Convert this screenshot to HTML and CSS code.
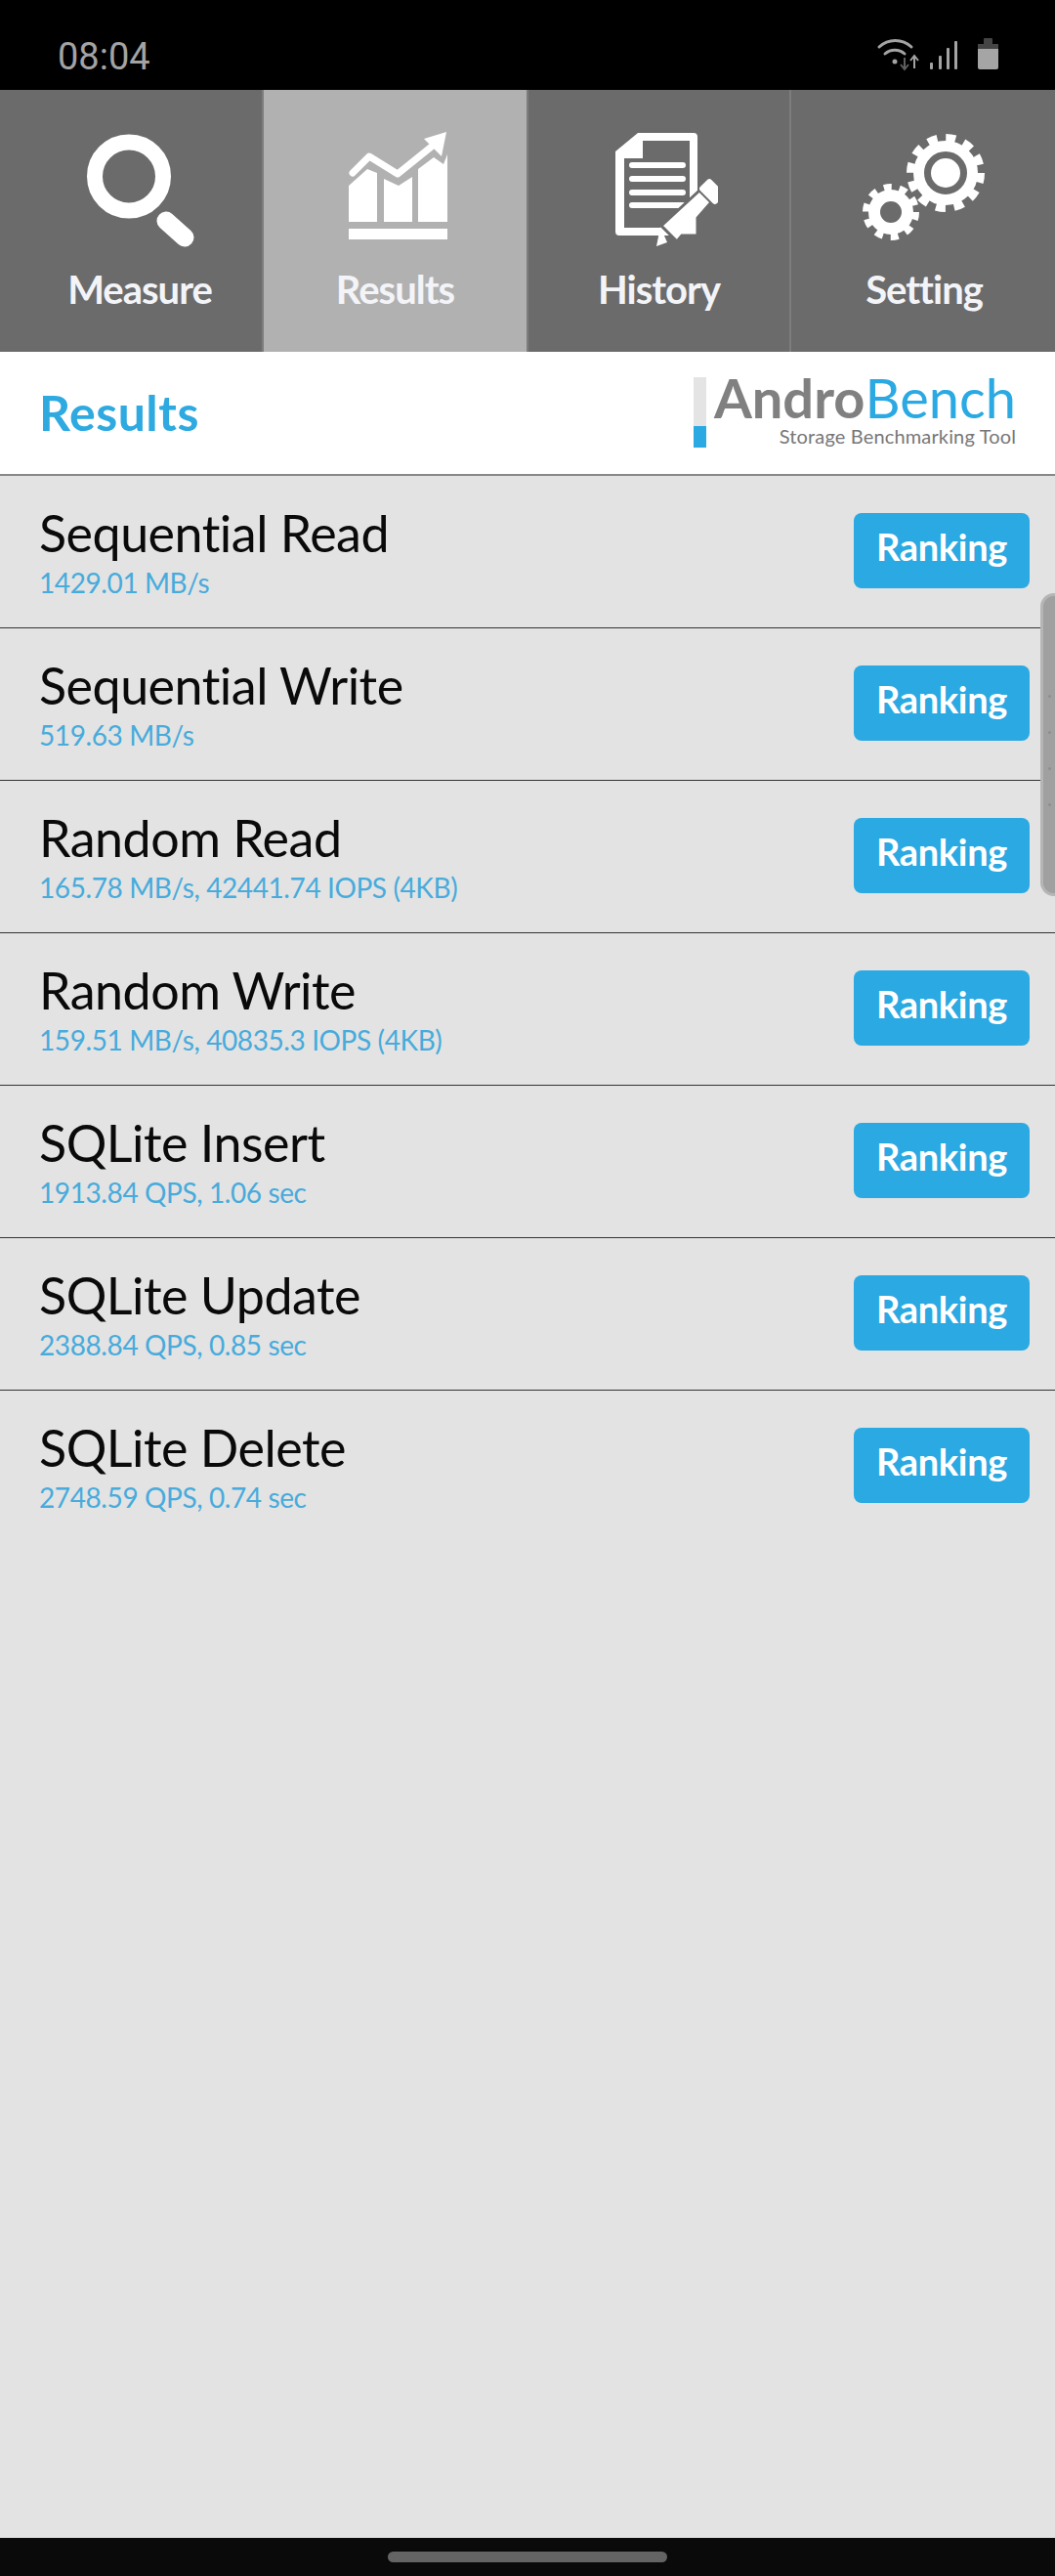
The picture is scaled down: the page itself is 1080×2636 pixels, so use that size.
FILE: index.html
```html
<!DOCTYPE html>
<html lang="en">
<head>
    <meta charset="UTF-8">
    <title>AndroBench Results</title>
    <link rel="stylesheet" href="styles.css">
</head>
<body>

<!-- Status bar -->
<div class="status-bar">
    <span class="clock">08:04</span>
    <svg class="status-icons" viewBox="890 36 140 40" width="140" height="40">
        <g fill="none" stroke="#a3a3a3" stroke-width="3" stroke-linecap="round">
            <path d="M900 48 A 24 24 0 0 1 933 48"/>
            <path d="M906 55 A 15 15 0 0 1 926 55"/>
        </g>
        <circle cx="916" cy="63" r="2.5" fill="#a3a3a3"/>
        <path d="M926 59 V70 M922 66 L926 71 L930 66" fill="none" stroke="#5e5e5e" stroke-width="2"/>
        <path d="M936 70 V58 M932 62 L936 57 L940 62" fill="none" stroke="#a3a3a3" stroke-width="2"/>
        <g fill="#a3a3a3">
            <rect x="952" y="64" width="3" height="7" rx="1"/>
            <rect x="961" y="57" width="3" height="14" rx="1"/>
            <rect x="969" y="49" width="3" height="22" rx="1"/>
            <rect x="977" y="42" width="3" height="29" rx="1"/>
        </g>
        <rect x="1007" y="39" width="9" height="8" rx="1" fill="#444"/>
        <rect x="1001" y="45" width="21" height="26" rx="2" fill="#a5a5a5"/>
        <path d="M1001 50 V47 Q1001 45 1003 45 H1020 Q1022 45 1022 47 V50 Z" fill="#444"/>
    </svg>
</div>

<!-- Tabs -->
<div class="tabs">
    <div class="tab tab-first">
        <svg class="tab-icon" viewBox="83 130 120 125" width="120" height="125">
            <circle cx="132" cy="180.5" r="35" fill="none" stroke="#fff" stroke-width="16"/>
            <path d="M170 226 L189 243" stroke="#fff" stroke-width="19" stroke-linecap="round"/>
        </svg>
        <span>Measure</span>
    </div>
    <div class="tab tab-active">
        <svg class="tab-icon" viewBox="344 130 120 125" width="120" height="125">
            <g fill="#fff">
                <rect x="356" y="234" width="101" height="11"/>
                <path d="M356 227 V190 L375 173 L385 177 V227 Z"/>
                <path d="M392 227 V183 L407 190 L421 181 V227 Z"/>
                <path d="M427 227 V173 L443 161 L453 168 L457 158 V227 Z"/>
                <path d="M456 135 L433 142 L451 160 Z"/>
            </g>
            <path d="M360 177 L377 160 L406 178 L442 149" fill="none" stroke="#fff" stroke-width="7" stroke-linecap="round" stroke-linejoin="round"/>
        </svg>
        <span>Results</span>
    </div>
    <div class="tab">
        <svg class="tab-icon" viewBox="614 130 120 125" width="120" height="125">
            <path fill="#fff" fill-rule="evenodd" d="M652 136 H709 Q713 136 713 140 V237 Q713 241 709 241 H633 Q629 241 629 237 V155 Z M657 144 H705 V233 H638 V162 H657 Z"/>
            <path d="M646 169 H698 M646 183 H698 M646 197 H698 M646 210 H698" stroke="#fff" stroke-width="6" stroke-linecap="round"/>
            <path fill="#fff" stroke="#6b6b6b" stroke-width="3" d="M715 195 L727 207 L713 223 V241 H697 L692 247 L676 231 Z"/>
            <path fill="#fff" d="M671 252 L675 232 L682 248 Z"/>
            <rect x="720" y="184" width="16" height="24" rx="3" fill="#fff" transform="rotate(-45 728 196)"/>
        </svg>
        <span>History</span>
    </div>
    <div class="tab tab-last">
        <svg class="tab-icon" viewBox="881 130 130 125" width="130" height="125">
            <g fill="none" stroke="#fff">
                <circle cx="968" cy="177" r="36" stroke-width="8" stroke-dasharray="10 8.85"/>
                <circle cx="968" cy="177" r="27.5" stroke-width="11"/>
                <circle cx="912" cy="217" r="25.5" stroke-width="7" stroke-dasharray="8 8.02"/>
                <circle cx="912" cy="217" r="17" stroke-width="12"/>
            </g>
            <circle cx="968" cy="177" r="15" fill="#fff"/>
        </svg>
        <span>Setting</span>
    </div>
</div>

<!-- Title + logo -->
<div class="header">
    <h1>Results</h1>
    <div class="logo">
        <div class="logo-bar"></div>
        <div class="logo-text">
            <div class="logo-name"><b>Andro</b>Bench</div>
            <div class="logo-sub">Storage Benchmarking Tool</div>
        </div>
    </div>
</div>

<!-- Result rows -->
<div class="results">
    <div class="row">
        <div>
            <div class="row-title">Sequential Read</div>
            <div class="row-value">1429.01 MB/s</div>
        </div>
        <button class="ranking-btn">Ranking</button>
    </div>
    <div class="row">
        <div>
            <div class="row-title">Sequential Write</div>
            <div class="row-value">519.63 MB/s</div>
        </div>
        <button class="ranking-btn">Ranking</button>
    </div>
    <div class="row">
        <div>
            <div class="row-title">Random Read</div>
            <div class="row-value">165.78 MB/s, 42441.74 IOPS (4KB)</div>
        </div>
        <button class="ranking-btn">Ranking</button>
    </div>
    <div class="row">
        <div>
            <div class="row-title">Random Write</div>
            <div class="row-value">159.51 MB/s, 40835.3 IOPS (4KB)</div>
        </div>
        <button class="ranking-btn">Ranking</button>
    </div>
    <div class="row">
        <div>
            <div class="row-title">SQLite Insert</div>
            <div class="row-value">1913.84 QPS, 1.06 sec</div>
        </div>
        <button class="ranking-btn">Ranking</button>
    </div>
    <div class="row">
        <div>
            <div class="row-title">SQLite Update</div>
            <div class="row-value">2388.84 QPS, 0.85 sec</div>
        </div>
        <button class="ranking-btn">Ranking</button>
    </div>
    <div class="row">
        <div>
            <div class="row-title">SQLite Delete</div>
            <div class="row-value">2748.59 QPS, 0.74 sec</div>
        </div>
        <button class="ranking-btn">Ranking</button>
    </div>
</div>

<!-- Bottom gesture bar -->
<div class="nav-bar"><div class="nav-pill"></div></div>

<!-- Edge panel handle, sits over the rows -->
<div class="edge-handle">
    <span></span><span></span><span></span><span></span>
</div>

</body>
</html>
```

FILE: styles.css
```css
html, body {
    margin: 0;
    height: 2636px;
}

body {
    display: flex;
    flex-direction: column;
    position: relative;
    overflow: hidden;
    background: #e3e3e3;
    font-family: 'Lato', 'Noto Sans', sans-serif;
    font-variant-ligatures: none;
}

/* Status bar */
.status-bar {
    height: 92px;
    background: #000;
    display: flex;
    align-items: flex-start;
    justify-content: space-between;
}

.clock {
    font-family: 'Roboto', sans-serif;
    font-size: 38px;
    line-height: 44px;
    color: #a3a3a3;
    margin: 36px 0 0 59px;
}

.status-icons {
    display: block;
    margin: 36px 50px 0 0;
}

/* Tabs */
.tabs {
    height: 268px;
    display: grid;
    grid-template-columns: 270px 271px 269px 270px;
    background: #6b6b6b;
}

.tab {
    display: flex;
    flex-direction: column;
    align-items: center;
    box-sizing: border-box;
    padding-top: 38px;
    border-right: 2px solid #7d7d7d;
    color: #f3f4f8;
    font-size: 40px;
    font-weight: 700;
    line-height: 50px;
    letter-spacing: -1px;
}

.tab-first {
    padding-left: 18px;
}

.tab-last {
    border-right: none;
    padding-left: 2px;
}

.tab-active {
    background: #b1b1b1;
}

.tab-icon {
    display: block;
    margin-bottom: 16px;
}

/* Header */
.header {
    height: 125px;
    background: #fff;
    border-bottom: 2px solid #888;
    display: flex;
    align-items: flex-start;
    justify-content: space-between;
    padding: 0 40px;
}

.header h1 {
    margin: 32px 0 0;
    font-size: 50px;
    line-height: 60px;
    font-weight: 700;
    letter-spacing: 0.5px;
    color: #2eaae1;
}

.logo {
    display: flex;
    margin-top: 23px;
}

.logo-bar {
    width: 13px;
    height: 72px;
    margin: 3px 8px 0 0;
    background: linear-gradient(#e4e4e4 50px, #2aa9e2 50px);
}

.logo-text {
    text-align: right;
}

.logo-name {
    font-size: 56px;
    line-height: 48px;
    color: #2aa9e2;
    white-space: nowrap;
}

.logo-name b {
    color: #808080;
}

.logo-sub {
    margin-top: 3px;
    font-size: 20px;
    line-height: 24px;
    letter-spacing: 0.15px;
    color: #777;
    white-space: nowrap;
}

/* Rows */
.results {
    flex: 1;
}

.row {
    height: 155px;
    border-bottom: 1px solid #333;
    display: flex;
    justify-content: space-between;
    align-items: flex-start;
    padding: 0 26px 0 40px;
}

.row:last-child {
    border-bottom: none;
}

.row-title {
    margin-top: 28px;
    font-size: 52px;
    line-height: 60px;
    letter-spacing: -0.5px;
    color: #0a0a0a;
}

.row-value {
    margin-top: 3px;
    font-size: 28px;
    line-height: 36px;
    letter-spacing: -0.4px;
    color: #47abdc;
}

.ranking-btn {
    width: 180px;
    height: 77px;
    margin-top: 38px;
    padding: 0 0 10px;
    border: none;
    border-radius: 8px;
    background: #2aa9e2;
    color: #fff;
    font-family: inherit;
    font-size: 38px;
    font-weight: 700;
    letter-spacing: -0.3px;
}

/* Bottom bar */
.nav-bar {
    height: 39px;
    background: #0a0a0a;
    display: flex;
    justify-content: center;
    padding-top: 14px;
    box-sizing: border-box;
}

.nav-pill {
    width: 286px;
    height: 11px;
    border-radius: 6px;
    background: #646464;
}

/* Edge handle */
.edge-handle {
    position: absolute;
    left: 1065px;
    top: 607px;
    width: 15px;
    height: 310px;
    box-sizing: border-box;
    border: 3px solid #b5b5b5;
    border-right: none;
    border-radius: 14px 0 0 14px;
    background: #a0a0a0;
    display: flex;
    flex-direction: column;
    align-items: center;
    gap: 34px;
    padding-top: 101px;
}

.edge-handle span {
    width: 3px;
    height: 3px;
    border-radius: 50%;
    background: #8e8e8e;
}
```
